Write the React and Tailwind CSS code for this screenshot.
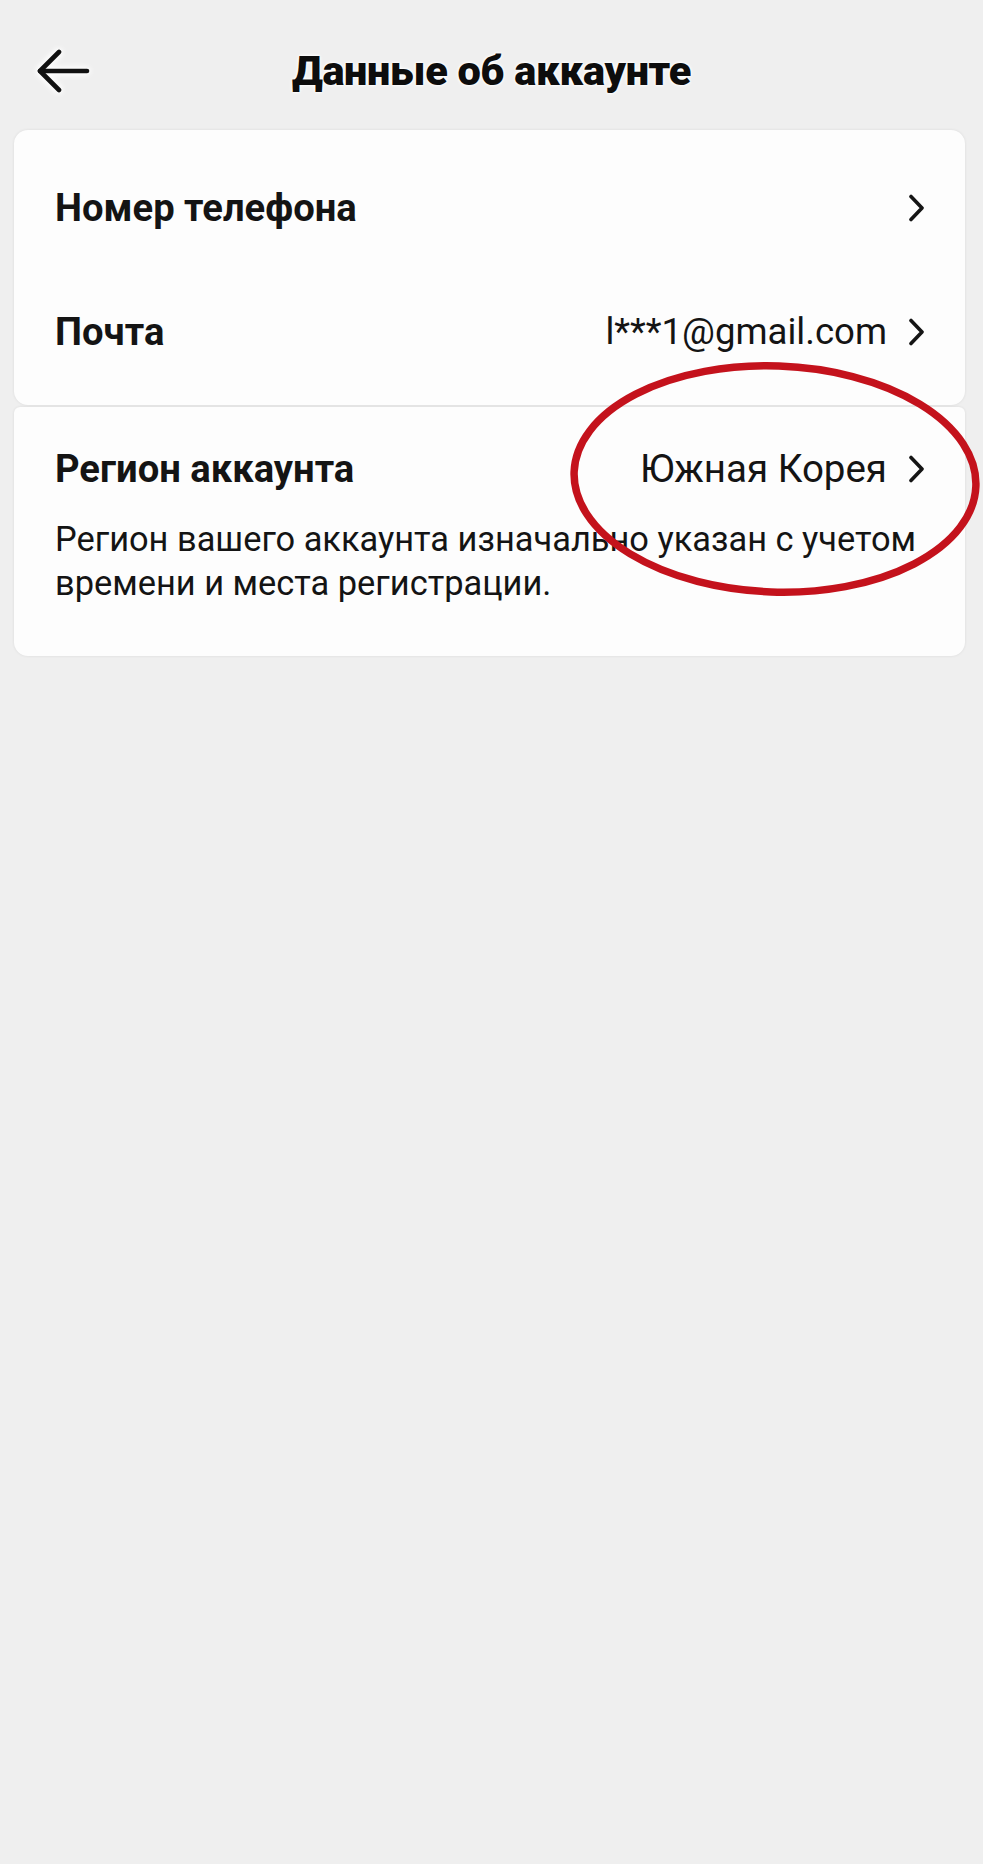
import React from "react";

function Chevron() {
  return (
    <svg width="17" height="28" viewBox="0 0 17 28" className="shrink-0">
      <path d="M3 2.5 L14 14 L3 25.5" fill="none" stroke="#151515" strokeWidth="3.6" strokeLinecap="round" strokeLinejoin="round" />
    </svg>
  );
}

function Row({ label, value }) {
  return (
    <div className="flex h-[124px] items-center justify-between">
      <span className="text-[38.2px] font-bold text-[#141414] leading-none">{label}</span>
      <div className="flex items-center gap-[21px]">
        {value ? <span className="text-[36.6px] font-normal text-[#141414] leading-none">{value}</span> : null}
        <Chevron />
      </div>
    </div>
  );
}

export default function App() {
  return (
    <div className="relative min-h-[1864px] w-full bg-[#efefef] font-['Roboto','Noto_Sans',sans-serif]">
      <header className="grid h-[130px] grid-cols-[1fr_auto_1fr] items-center pt-[12px]">
        <div className="pl-[36px]">
          <svg width="54" height="44" viewBox="0 0 54 44" className="[filter:drop-shadow(0_0_3px_white)_drop-shadow(0_0_2px_white)]">
            <path d="M4 22 H51" fill="none" stroke="#111" strokeWidth="4.6" strokeLinecap="round" />
            <path d="M23 3 L4 22 L23 41" fill="none" stroke="#111" strokeWidth="4.6" strokeLinecap="round" strokeLinejoin="round" />
          </svg>
        </div>
        <h1 className="text-[41.5px] font-black tracking-[-0.3px] text-[#0d0d0d] leading-none [text-shadow:0_0_4px_#fff,0_0_3px_#fff,0_0_2px_#fff]">
          Данные об аккаунте
        </h1>
        <div />
      </header>

      <div className="pl-[14px] pr-[18px]">
        <section className="rounded-[14px] bg-[#fdfdfd] pl-[41px] pr-[40px] pt-[16px] pb-[11px] shadow-[0_0_3px_rgba(0,0,0,0.09)]">
          <Row label="Номер телефона" />
          <Row label="Почта" value="l***1@gmail.com" />
        </section>

        <section className="mt-[2px] rounded-[14px] rounded-t-[6px] bg-[#fdfdfd] pl-[41px] pr-[40px] pt-[38px] pb-[51px] shadow-[0_0_3px_rgba(0,0,0,0.09)]">
          <div className="flex h-[48px] items-center justify-between">
            <span className="text-[38.2px] font-bold text-[#141414] leading-none">Регион аккаунта</span>
            <div className="flex items-center gap-[21px]">
              <span className="text-[38.5px] font-normal text-[#141414] leading-none">Южная Корея</span>
              <Chevron />
            </div>
          </div>
          <p className="mt-[24px] text-[34.4px] leading-[44px] text-[#141414]">
            Регион вашего аккаунта изначально указан с учетом
            <br />
            времени и места регистрации.
          </p>
        </section>
      </div>

      <svg
        className="pointer-events-none absolute left-[565px] top-[355px]"
        width="418"
        height="250"
        viewBox="0 0 418 250"
      >
        <ellipse cx="210" cy="124" rx="201" ry="113" fill="none" stroke="#c4121c" strokeWidth="7.5" transform="rotate(2 210 124)" />
      </svg>
    </div>
  );
}
